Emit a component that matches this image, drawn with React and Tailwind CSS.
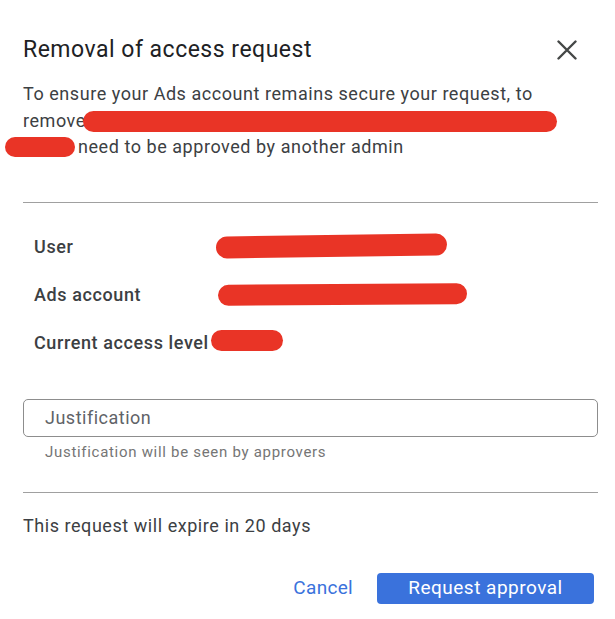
function Blob({ className }) {
  return (
    <span
      className={`absolute rounded-full bg-[#e93426] ${className}`}
      aria-hidden="true"
    />
  )
}

export default function App() {
  return (
    <div className="relative w-[615px] h-[619px] bg-white font-['Roboto','Liberation_Sans',sans-serif] text-[#202124]">
      <div className="pl-[23px] pr-[17px] pt-[35px]">
        {/* Header */}
        <div className="flex items-center justify-between">
          <h1 className="text-[23px] leading-[30px] tracking-[0.5px] font-normal text-[#202124]">
            Removal of access request
          </h1>
          <button className="mr-[21px] text-[#444746]">
            <svg width="20" height="20" viewBox="0 0 20 20" fill="none" stroke="currentColor" strokeWidth="2.4" strokeLinecap="round">
              <path d="M1.5 1.5 18.5 18.5M18.5 1.5 1.5 18.5" />
            </svg>
          </button>
        </div>

        {/* Description */}
        <div className="relative mt-[16px] text-[18px] leading-[26.5px] tracking-[0.55px] text-[#3c4043]">
          <p>To ensure your Ads account remains secure your request, to</p>
          <p>remove</p>
          <p className="pl-[55px]">need to be approved by another admin</p>
          <Blob className="left-[60px] top-[30px] w-[474px] h-[21px]" />
          <Blob className="left-[-18px] top-[56px] w-[70px] h-[20px]" />
        </div>

        <div className="mt-[41px] h-px bg-[#a0a0a0]" />

        {/* Details */}
        <div className="relative mt-[31px] pl-[11px] flex flex-col gap-[22px] text-[18px] leading-[26px] tracking-[0.6px] font-medium text-[#3c4043]">
          <div>User</div>
          <div>Ads account</div>
          <div>Current access level</div>
          <Blob className="left-[193px] top-[1px] w-[231px] h-[22px] -rotate-[0.8deg]" />
          <Blob className="left-[195px] top-[50px] w-[249px] h-[21px] -rotate-[0.4deg]" />
          <Blob className="left-[188px] top-[96px] w-[72px] h-[21px]" />
        </div>

        {/* Justification */}
        <div className="mt-[43px]">
          <div className="h-[38px] rounded-[5px] border border-[#8d8d8d] flex items-center px-[21px] text-[18px] tracking-[0.5px] text-[#5f6368]">
            Justification
          </div>
          <div className="mt-[6px] pl-[22px] text-[15px] leading-[18px] tracking-[0.7px] text-[#757575]">
            Justification will be seen by approvers
          </div>
        </div>

        <div className="mt-[31px] h-px bg-[#a0a0a0]" />

        <p className="mt-[20px] text-[18px] leading-[26px] tracking-[0.55px] text-[#3c4043]">
          This request will expire in 20 days
        </p>

        {/* Actions */}
        <div className="mt-[34px] flex justify-end items-center gap-[24px] pr-[4px]">
          <button className="text-[19px] tracking-[0.3px] text-[#3a72dc]">Cancel</button>
          <button className="h-[31px] w-[217px] rounded-[4px] bg-[#3a72dc] text-white text-[19px] tracking-[0.5px]">
            Request approval
          </button>
        </div>
      </div>
    </div>
  )
}
